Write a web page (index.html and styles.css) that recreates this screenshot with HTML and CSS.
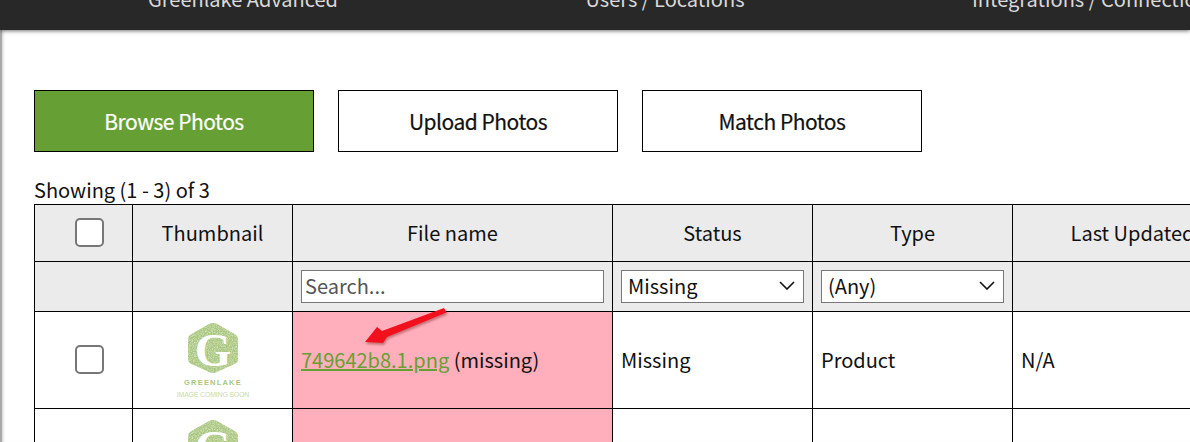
FILE: index.html
```html
<!DOCTYPE html>
<html lang="en">
<head>
<meta charset="utf-8">
<title>Photos</title>
<link rel="stylesheet" href="styles.css">
</head>
<body>
<svg width="0" height="0" class="defs">
  <defs>
    <filter id="grain" x="0" y="0" width="100%" height="100%">
      <feTurbulence type="fractalNoise" baseFrequency="0.8" numOctaves="2" seed="4" result="n"/>
      <feColorMatrix in="n" type="matrix" values="0 0 0 0 .85  0 0 0 0 .92  0 0 0 0 .75  1.4 0 0 0 -0.55"/>
      <feComposite in2="SourceGraphic" operator="in" result="specks"/>
      <feMerge><feMergeNode in="SourceGraphic"/><feMergeNode in="specks"/></feMerge>
    </filter>
    <symbol id="logo" viewBox="0 0 84 84">
      <path class="hex" d="M42 3 Q44 3 46 4 L64.500 14.500 Q67 16 67 19 L67 39 Q67 42 64.500 43.500 L46 52 Q42 54 38 52 L19.500 43.500 Q17 42 17 39 L17 19 Q17 16 19.500 14.500 L38 4 Q40 3 42 3Z" filter="url(#grain)"/>
      <text class="logo-g" x="42" y="46" text-anchor="middle">G</text>
      <text class="logo-name" x="42" y="65" text-anchor="middle">GREENLAKE</text>
      <text class="logo-soon" x="42" y="77" text-anchor="middle">IMAGE COMING SOON</text>
    </symbol>
  </defs>
</svg>
<header class="topbar">
  <span class="topbar-item">Greenlake Advanced</span>
  <span class="topbar-item">Users / Locations</span>
  <span class="topbar-item">Integrations / Connections</span>
</header>
<main class="page">
  <nav class="tabs">
    <a class="tab tab-active">Browse Photos</a>
    <a class="tab">Upload Photos</a>
    <a class="tab">Match Photos</a>
  </nav>
  <p class="count">Showing (1 - 3) of 3</p>
  <table class="grid">
    <colgroup>
      <col class="c-check"><col class="c-thumb"><col class="c-file"><col class="c-status"><col class="c-type"><col class="c-updated">
    </colgroup>
    <thead>
      <tr class="head-row">
        <th class="check-cell"><span class="check"></span></th>
        <th>Thumbnail</th>
        <th>File name</th>
        <th>Status</th>
        <th>Type</th>
        <th>Last Updated</th>
      </tr>
      <tr class="filter-row">
        <th></th>
        <th></th>
        <th><span class="search">Search...</span></th>
        <th><span class="select">Missing<svg class="chev" width="16" height="9" viewBox="0 0 16 9"><path d="M1 1l7 7 7-7"/></svg></span></th>
        <th><span class="select">(Any)<svg class="chev" width="16" height="9" viewBox="0 0 16 9"><path d="M1 1l7 7 7-7"/></svg></span></th>
        <th></th>
      </tr>
    </thead>
    <tbody>
      <tr class="body-row">
        <td class="center check-cell"><span class="check"></span></td>
        <td class="center"><svg class="logo" width="84" height="84"><use href="#logo"/></svg></td>
        <td class="missing"><a class="file-link">749642b8.1.png</a> (missing)</td>
        <td>Missing</td>
        <td>Product</td>
        <td>N/A</td>
      </tr>
      <tr class="body-row">
        <td class="center check-cell"><span class="check"></span></td>
        <td class="center"><svg class="logo" width="84" height="84"><use href="#logo"/></svg></td>
        <td class="missing"></td>
        <td></td>
        <td></td>
        <td></td>
      </tr>
    </tbody>
  </table>
</main>
<svg class="arrow" width="90" height="44" viewBox="0 0 90 44"><path d="M5 35 L17 20 L22 24 L84 1 L86.500 5.500 L27 30 L23 36Z"/></svg>
</body>
</html>
```

FILE: styles.css
```css
* { box-sizing: border-box; }
html, body { margin: 0; height: 442px; overflow: hidden; background: #fff; }
body { position: relative; font-family: "Noto Sans CJK JP", "Noto Sans", sans-serif; color: #111; }
.defs { position: absolute; }

.topbar {
  position: relative;
  z-index: 2;
  display: grid;
  grid-template-columns: 422px 422px 438px;
  padding-left: 32px;
  height: 30px;
  background: #282828;
  color: #d9d9d9;
  font-size: 20px;
  line-height: 20px;
  white-space: nowrap;
  overflow: hidden;
  box-shadow: 0 1px 4px rgba(0, 0, 0, .55);
}
.topbar-item { margin-top: -11px; text-align: center; }

.page {
  height: 412px;
  padding: 60px 0 0 32px;
  border-left: 2px solid #a9a9a9;
  box-shadow: inset 3px 0 3px -2px #ccc;
  overflow: hidden;
}

.tabs { display: flex; gap: 24px; }
.tab {
  display: flex;
  align-items: center;
  justify-content: center;
  width: 280px;
  height: 62px;
  border: 1px solid #000;
  font-size: 21px;
  font-weight: 400;
  letter-spacing: -.5px;
  -webkit-text-stroke: .2px currentColor;
  background: #fff;
  color: #111;
}
.tab-active { background: #66a035; color: #fff; }

.count { margin: 24px 0 0; height: 28px; font-size: 20px; line-height: 28px; }

.grid { border-collapse: collapse; table-layout: fixed; width: 1218px; font-size: 20px; }
.c-check { width: 98px; }
.c-thumb { width: 160px; }
.c-file { width: 320px; }
.c-status, .c-type { width: 200px; }
.c-updated { width: 240px; }
.grid th, .grid td { border: 1px solid #000; padding: 0 8px 2px; }
.grid th { background: #ebebeb; font-weight: 400; text-align: center; white-space: nowrap; }
.grid .check-cell { padding: 0 8px 4px 20px; }
.grid .filter-row th { padding-bottom: 0; }
.head-row { height: 57px; }
.filter-row { height: 50px; }
.body-row { height: 97px; }
.center { text-align: center; }
.check {
  display: inline-block;
  width: 29px;
  height: 29px;
  border: 2px solid #777;
  border-radius: 5px;
  background: #fff;
  vertical-align: middle;
}
.search, .select {
  display: flex;
  align-items: center;
  height: 33px;
  border: 1px solid #777;
  background: #fff;
  font-weight: 400;
  text-align: left;
}
.search { padding: 0 0 2px 3px; color: #555; }
.select { justify-content: space-between; padding: 0 8px 2px 6px; color: #111; }
.chev { fill: none; stroke: #111; stroke-width: 1.6; }
.missing { background: #ffaebb; white-space: nowrap; }
.file-link { color: #66a035; text-decoration: underline; }
.logo { display: block; margin: 5px auto 0; }
.body-row td.center { vertical-align: middle; }

.hex { fill: #aac77f; }
.logo-g { fill: #fff; font-family: "Liberation Serif", serif; font-weight: 700; font-size: 47px; }
.logo-name { fill: #aac77f; font-family: "Liberation Sans", sans-serif; font-size: 7.500px; font-weight: 700; letter-spacing: 1.200px; }
.logo-soon { fill: #c8dbaa; font-family: "Liberation Sans", sans-serif; font-size: 7px; letter-spacing: -.2px; }

.arrow {
  position: absolute;
  left: 360px;
  top: 307px;
  z-index: 3;
  fill: #f2101c;
  filter: drop-shadow(1px 2px 1px rgba(90, 0, 0, .35));
}
```
